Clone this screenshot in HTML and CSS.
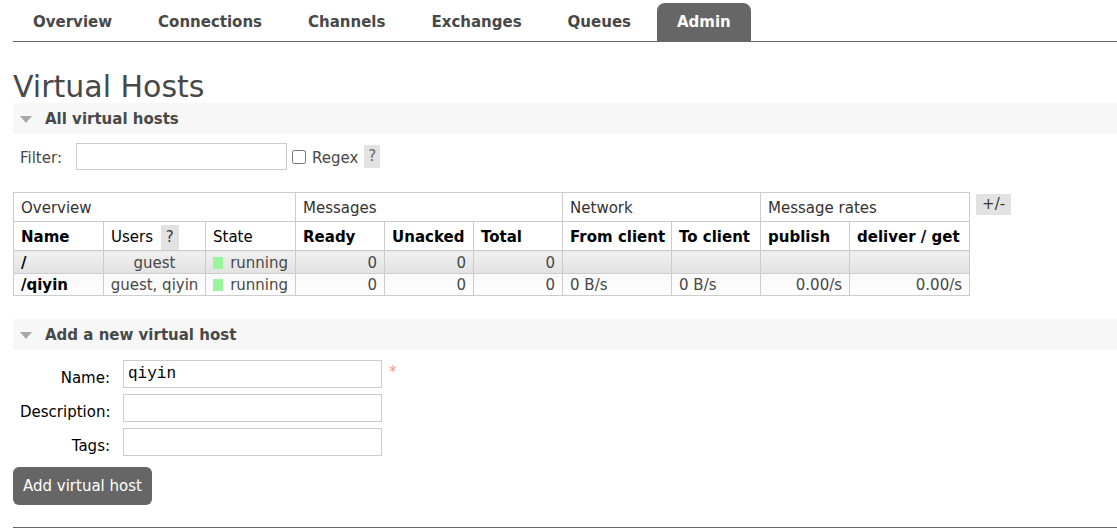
FILE: index.html
```html
<!DOCTYPE html>
<html>
<head>
<meta charset="utf-8">
<title>RabbitMQ Management</title>
<link rel="stylesheet" href="styles.css">
</head>
<body>
<div class="page">
  <ul class="tabs">
    <li><a>Overview</a></li>
    <li><a>Connections</a></li>
    <li><a>Channels</a></li>
    <li><a>Exchanges</a></li>
    <li><a>Queues</a></li>
    <li class="active"><a>Admin</a></li>
  </ul>

  <h1 class="title">Virtual Hosts</h1>

  <div class="section-bar"><span class="tri"></span><span>All virtual hosts</span></div>

  <div class="filter-row">
    <label class="filter-label">Filter:</label>
    <input class="filter-input" type="text">
    <input class="check" type="checkbox">
    <span class="regex">Regex</span>
    <span class="help">?</span>
  </div>

  <div class="table-wrap">
    <table class="list">
      <colgroup>
        <col style="width:90px"><col style="width:102px"><col style="width:90px">
        <col style="width:89px"><col style="width:89px"><col style="width:89px">
        <col style="width:109px"><col style="width:89px">
        <col style="width:89px"><col style="width:120px">
      </colgroup>
      <thead>
        <tr class="group">
          <th colspan="3">Overview</th>
          <th colspan="3">Messages</th>
          <th colspan="2">Network</th>
          <th colspan="2">Message rates</th>
        </tr>
        <tr class="cols">
          <th class="b">Name</th>
          <th>Users <span class="help">?</span></th>
          <th>State</th>
          <th class="b">Ready</th>
          <th class="b">Unacked</th>
          <th class="b">Total</th>
          <th class="b">From client</th>
          <th class="b">To client</th>
          <th class="b">publish</th>
          <th class="b">deliver / get</th>
        </tr>
      </thead>
      <tbody>
        <tr class="alt1">
          <td class="b">/</td>
          <td class="c">guest</td>
          <td><span class="state"><span class="green"></span>running</span></td>
          <td class="r">0</td>
          <td class="r">0</td>
          <td class="r">0</td>
          <td></td><td></td><td></td><td></td>
        </tr>
        <tr class="alt2">
          <td class="b">/qiyin</td>
          <td class="c">guest, qiyin</td>
          <td><span class="state"><span class="green"></span>running</span></td>
          <td class="r">0</td>
          <td class="r">0</td>
          <td class="r">0</td>
          <td>0 B/s</td>
          <td>0 B/s</td>
          <td class="r">0.00/s</td>
          <td class="r">0.00/s</td>
        </tr>
      </tbody>
    </table>
    <span class="plusminus">+/-</span>
  </div>

  <div class="section-bar second"><span class="tri"></span><span>Add a new virtual host</span></div>

  <div class="form">
    <label class="lbl">Name:</label>
    <input class="field mono" type="text" value="qiyin">
    <span class="req">*</span>
    <label class="lbl">Description:</label>
    <input class="field" type="text">
    <span></span>
    <label class="lbl">Tags:</label>
    <input class="field" type="text">
    <span></span>
  </div>
  <button class="btn">Add virtual host</button>

  <div class="footer"></div>
</div>
</body>
</html>
```

FILE: styles.css
```css
html, body {
  margin: 0;
  padding: 0;
  background: #fff;
}
body {
  font-family: "DejaVu Sans", Verdana, sans-serif;
  font-size: 15px;
  color: #484848;
}
.page {
  padding-left: 13px;
}
.tabs {
  list-style: none;
  margin: 0;
  padding: 3px 0 0 0;
  display: flex;
  border-bottom: 1px solid #666;
}
.tabs li {
  margin-right: 6px;
}
.tabs a {
  display: block;
  height: 38px;
  line-height: 38px;
  padding: 0 20px;
  font-weight: bold;
  color: #484848;
}
.tabs li.active a {
  background: #666;
  color: #fff;
  border-radius: 8px 8px 0 0;
}
.title {
  font-size: 30px;
  font-weight: normal;
  line-height: 33px;
  margin: 28px 0 0 0;
  color: #484848;
}
.section-bar {
  height: 31px;
  background: #f7f7f7;
  display: flex;
  align-items: center;
  padding-left: 7px;
  font-weight: bold;
  color: #484848;
}
.section-bar.second {
  margin-top: 23px;
}
.tri {
  width: 0;
  height: 0;
  border-left: 6px solid transparent;
  border-right: 6px solid transparent;
  border-top: 7px solid #a8a8a8;
  margin-right: 13px;
  margin-top: 1px;
}
.filter-row {
  display: flex;
  align-items: center;
  margin-top: 9px;
  padding-left: 7px;
  height: 27px;
}
.filter-label {
  margin-right: 14px;
  padding-top: 2px;
}
.filter-input {
  width: 211px;
  height: 27px;
  box-sizing: border-box;
  border: 1px solid #ccc;
  margin: 0;
  padding: 2px 4px;
}
.check {
  margin: 0 6px 0 5px;
  width: 14px;
  height: 14px;
}
.regex {
  color: #484848;
  padding-top: 2px;
}
.help {
  display: inline-block;
  background: #e2e2e2;
  color: #666;
  padding: 0 4px;
  line-height: 23px;
  margin-left: 6px;
}
.table-wrap {
  display: flex;
  align-items: flex-start;
  margin-top: 22px;
}
table.list {
  border-collapse: collapse;
  table-layout: fixed;
  width: 957px;
  border: 1px solid #ccc;
}
table.list th, table.list td {
  border: 1px solid #ccc;
  text-align: left;
  white-space: nowrap;
  overflow: hidden;
}
table.list th {
  font-weight: normal;
  color: #000;
  padding: 6px 7px 4px 7px;
  line-height: 18px;
}
table.list tr.group th {
  color: #333;
}
table.list th .help {
  margin-left: 3px;
  line-height: 18px;
  padding: 3px 5px 4px 5px;
  margin-top: -6px;
  margin-bottom: -4px;
  vertical-align: baseline;
  color: #333;
}
table.list tr.cols th {
  height: 18px;
}
table.list th.b {
  font-weight: bold;
}
table.list td {
  padding: 3px 7px 1px 7px;
  line-height: 18px;
  color: #484848;
}
table.list td.b {
  font-weight: bold;
  color: #000;
}
table.list td.c {
  text-align: center;
  padding-left: 3px;
  padding-right: 3px;
}
table.list td.r {
  text-align: right;
}
tr.alt1 td {
  background: linear-gradient(#f0f0f0, #e2e2e2);
}
tr.alt2 td {
  background: linear-gradient(#f8f8f8, #fff);
  padding-top: 2px;
  padding-bottom: 1px;
}
.state {
  display: flex;
  align-items: center;
}
.green {
  display: inline-block;
  width: 12px;
  height: 12px;
  background: #99f599;
  margin-right: 7px;
}
.plusminus {
  background: #e2e2e2;
  color: #333;
  margin-left: 6px;
  margin-top: 2px;
  padding: 0 6px;
  line-height: 21px;
}
.form {
  display: grid;
  grid-template-columns: 90px 259px auto;
  column-gap: 13px;
  row-gap: 6px;
  margin-top: 10px;
  padding-left: 7px;
  align-items: center;
}
.lbl {
  text-align: right;
  color: #000;
  padding-top: 7px;
}
.field {
  height: 28px;
  box-sizing: border-box;
  border: 1px solid #ccc;
  margin: 0;
  padding: 1px 4px;
  font-size: 15px;
}
.mono {
  font-family: "Liberation Mono", "Courier New", monospace;
  font-size: 16px;
  color: #000;
}
.req {
  color: #f59a9a;
  align-self: start;
  margin-left: -6px;
  font-size: 15px;
  line-height: 18px;
  margin-top: 3px;
}
.btn {
  display: block;
  margin-top: 11px;
  height: 38px;
  background: #666;
  color: #fff;
  border: none;
  border-radius: 6px;
  padding: 0 10px;
  font-family: "DejaVu Sans", Verdana, sans-serif;
  font-size: 15px;
}
.footer {
  margin-top: 22px;
  border-top: 1px solid #666;
  height: 3px;
}
```
